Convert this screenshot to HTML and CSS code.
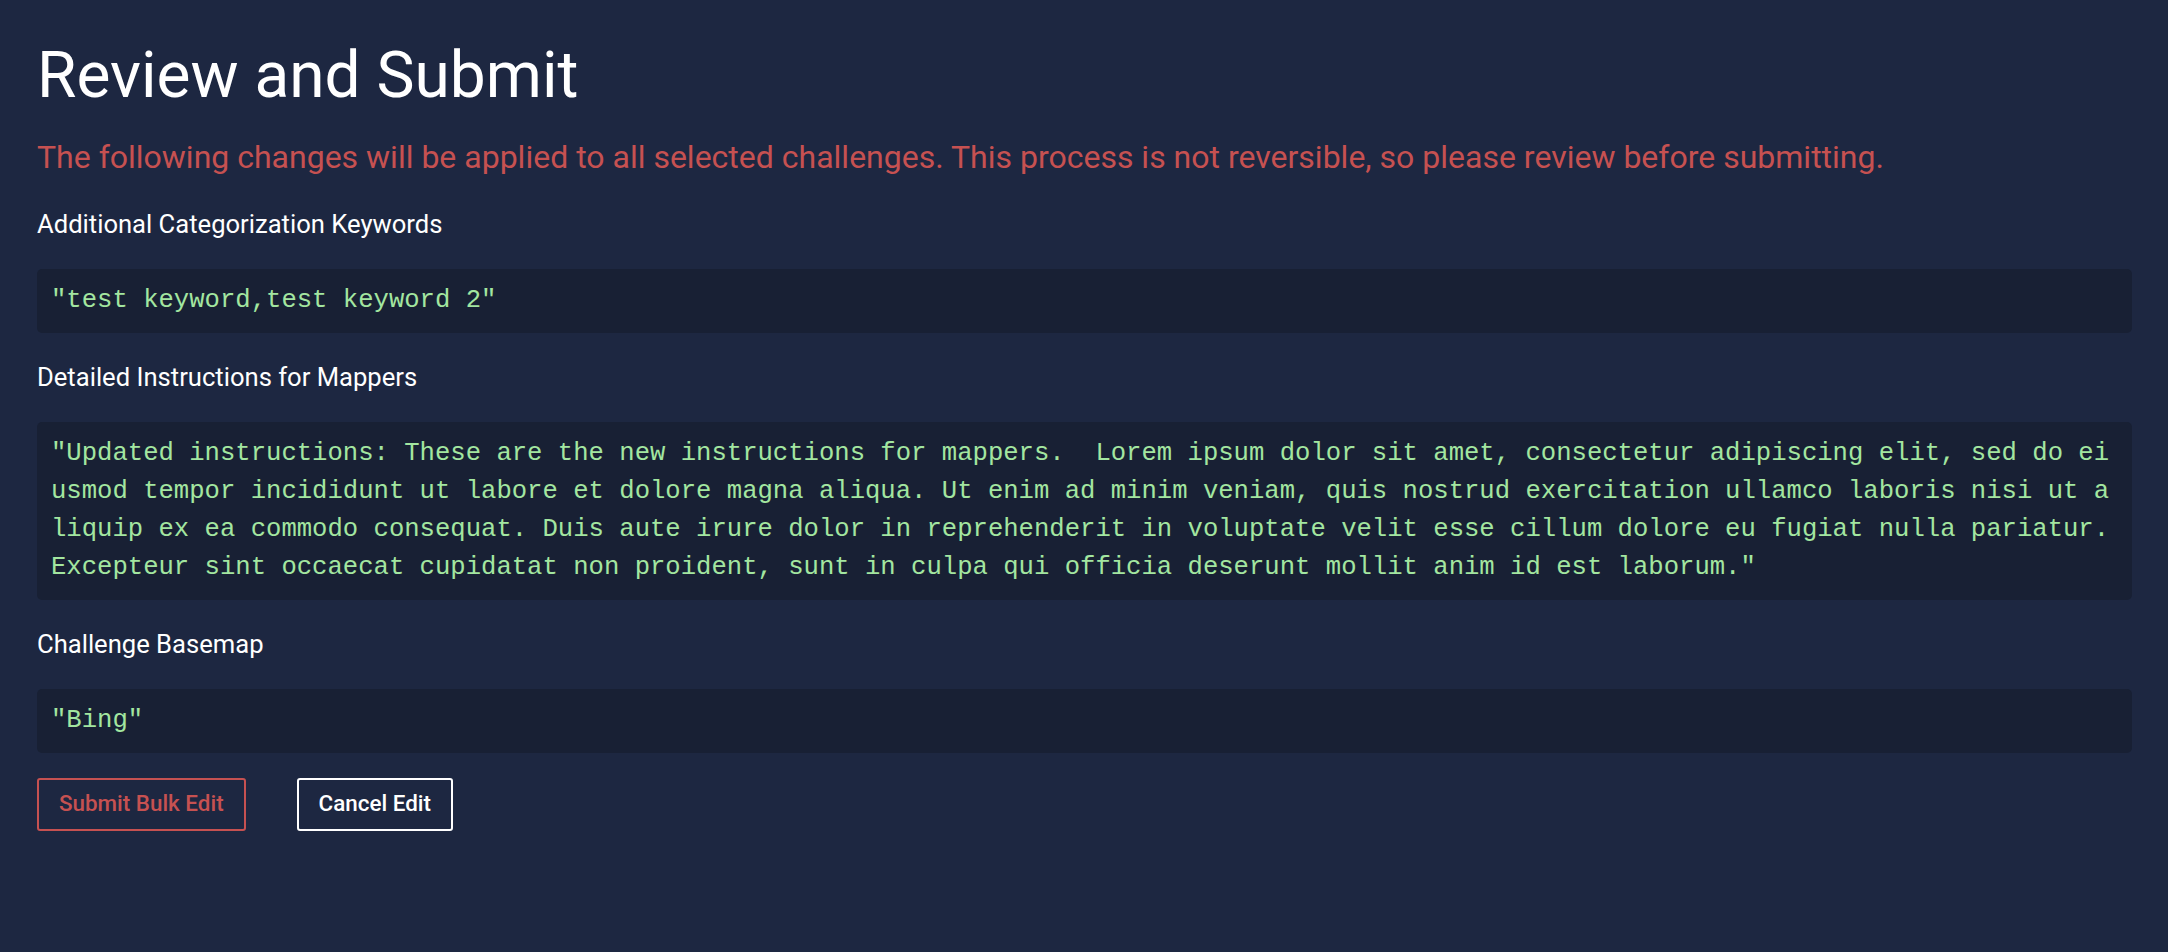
FILE: index.html
```html
<!DOCTYPE html>
<html lang="en">
<head>
<meta charset="utf-8">
<title>Review and Submit</title>
<link rel="stylesheet" href="styles.css">
</head>
<body>
<main class="page">
  <h1 class="title">Review and Submit</h1>
  <p class="warning">The following changes will be applied to all selected challenges. This process is not reversible, so please review before submitting.</p>

  <section class="field">
    <h2 class="field-label">Additional Categorization Keywords</h2>
    <pre class="field-value">"test keyword,test keyword 2"</pre>
  </section>

  <section class="field">
    <h2 class="field-label">Detailed Instructions for Mappers</h2>
    <pre class="field-value">"Updated instructions: These are the new instructions for mappers.  Lorem ipsum dolor sit amet, consectetur adipiscing elit, sed do eiusmod tempor incididunt ut labore et dolore magna aliqua. Ut enim ad minim veniam, quis nostrud exercitation ullamco laboris nisi ut aliquip ex ea commodo consequat. Duis aute irure dolor in reprehenderit in voluptate velit esse cillum dolore eu fugiat nulla pariatur. Excepteur sint occaecat cupidatat non proident, sunt in culpa qui officia deserunt mollit anim id est laborum."</pre>
  </section>

  <section class="field">
    <h2 class="field-label">Challenge Basemap</h2>
    <pre class="field-value">"Bing"</pre>
  </section>

  <div class="actions">
    <button class="btn btn-danger" type="button">Submit Bulk Edit</button>
    <button class="btn btn-plain" type="button">Cancel Edit</button>
  </div>
</main>
</body>
</html>
```
FILE: styles.css
```css
html, body {
  margin: 0;
  padding: 0;
  background: #1d2741;
  height: 100%;
}

body {
  font-family: Roboto, "Liberation Sans", sans-serif;
  color: #ffffff;
}

.page {
  display: flex;
  flex-direction: column;
  padding: 38px 36px 0 37px;
}

.title {
  margin: 0;
  font-size: 64px;
  font-weight: 400;
  line-height: 76.8px;
  color: #ffffff;
}

.warning {
  margin: 18px 0 0;
  font-size: 32px;
  line-height: 48px;
  color: #c65151;
}

.field {
  display: flex;
  flex-direction: column;
}

.field-label {
  margin: 24px 0 0;
  font-size: 25.6px;
  font-weight: 400;
  line-height: 38.4px;
  color: #ffffff;
}

.field + .field .field-label {
  margin-top: 25px;
}

.field-value {
  margin: 25.6px 0 0;
  padding: 13px 14px;
  background: #182034;
  border-radius: 5px;
  font-family: "Liberation Mono", "DejaVu Sans Mono", monospace;
  font-size: 25.6px;
  line-height: 38px;
  color: #a3e6a0;
  white-space: pre-wrap;
  word-break: break-all;
}

.actions {
  display: flex;
  gap: 51px;
  margin-top: 25px;
}

.btn {
  font-family: Roboto, "Liberation Sans", sans-serif;
  font-size: 22.4px;
  font-weight: 500;
  line-height: 33.6px;
  padding: 7.7px 20px;
  background: transparent;
  border: 2px solid;
  border-radius: 3px;
  cursor: pointer;
}

.btn-danger {
  color: #c65151;
  border-color: #c65151;
}

.btn-plain {
  color: #ffffff;
  border-color: #ffffff;
}
```
